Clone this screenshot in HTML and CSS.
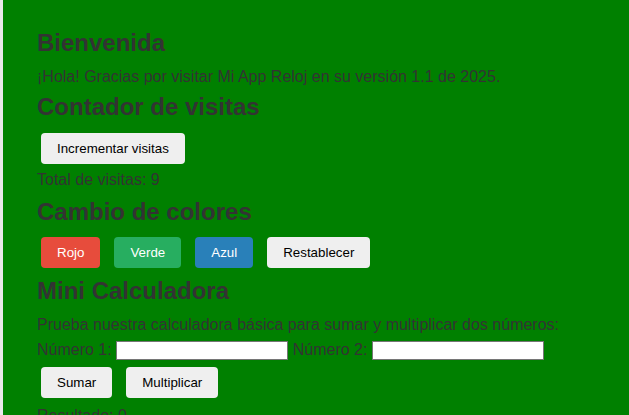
FILE: index.html
```html
<!DOCTYPE html>
<html lang="es">
<head>
<meta charset="utf-8">
<title>Mi App Reloj</title>
<link rel="stylesheet" href="styles.css">
</head>
<body>
<main class="app">
  <h2 class="title">Bienvenida</h2>
  <p class="text gap-h2">¡Hola! Gracias por visitar Mi App Reloj en su versión 1.1 de 2025.</p>

  <h2 class="title gap-p">Contador de visitas</h2>
  <div class="btn-row gap-h2-btn">
    <button class="btn">Incrementar visitas</button>
  </div>
  <p class="text gap-btn">Total de visitas: 9</p>

  <h2 class="title gap-p2">Cambio de colores</h2>
  <div class="btn-row gap-h2-btn2">
    <button class="btn btn-red">Rojo</button>
    <button class="btn btn-green">Verde</button>
    <button class="btn btn-blue">Azul</button>
    <button class="btn">Restablecer</button>
  </div>

  <h2 class="title gap-btn-h2">Mini Calculadora</h2>
  <p class="text gap-h2">Prueba nuestra calculadora básica para sumar y multiplicar dos números:</p>
  <div class="calc-row">
    <label class="text" for="n1">Número 1:</label>
    <input class="num" id="n1" type="number">
    <label class="text" for="n2">Número 2:</label>
    <input class="num" id="n2" type="number">
  </div>
  <div class="btn-row gap-row-btn">
    <button class="btn">Sumar</button>
    <button class="btn">Multiplicar</button>
  </div>
  <p class="text gap-result">Resultado: 0</p>
</main>
</body>
</html>
```

FILE: styles.css
```css
html, body {
  margin: 0;
  padding: 0;
  height: 100%;
  overflow: hidden;
  background: #e8e8ea;
}

.app {
  margin-left: 3px;
  min-height: 100%;
  box-sizing: border-box;
  background: #008000;
  padding: 29px 0 0 34px;
  display: flex;
  flex-direction: column;
  align-items: flex-start;
  font-family: "Liberation Sans", Arial, sans-serif;
  color: #333;
}

.title {
  margin: 0;
  font-size: 24px;
  line-height: 28px;
  font-weight: bold;
}

.text {
  margin: 0;
  font-size: 16px;
  line-height: 18px;
}

.gap-h2 { margin-top: 10.5px; }
.gap-p { margin-top: 7px; }
.gap-p2 { margin-top: 8.5px; }
.gap-h2-btn { margin-top: 12.5px; }
.gap-h2-btn2 { margin-top: 11.5px; }
.gap-btn { margin-top: 7px; }
.gap-btn-h2 { margin-top: 9px; }
.gap-row-btn { margin-top: 7.5px; }
.gap-result { margin-top: 9px; }

.btn-row {
  display: flex;
  gap: 14px;
  padding-left: 4px;
}

.btn {
  font-family: "Liberation Sans", Arial, sans-serif;
  font-size: 13.33px;
  line-height: 15px;
  height: 31px;
  padding: 8px 16px;
  border: none;
  border-radius: 4px;
  background: #efefef;
  color: #000;
}

.btn-red { background: #e74c3c; color: #fff; }
.btn-green { background: #27ae60; color: #fff; }
.btn-blue { background: #2980b9; color: #fff; }

.calc-row {
  margin-top: 7px;
  display: flex;
  align-items: center;
  gap: 4.5px;
}

.num {
  box-sizing: border-box;
  width: 172px;
  height: 19px;
  margin: 0;
  padding: 0 2px;
  border: 1px solid #767676;
  background: #fff;
  font-family: "Liberation Sans", Arial, sans-serif;
  font-size: 13.33px;
}
```
